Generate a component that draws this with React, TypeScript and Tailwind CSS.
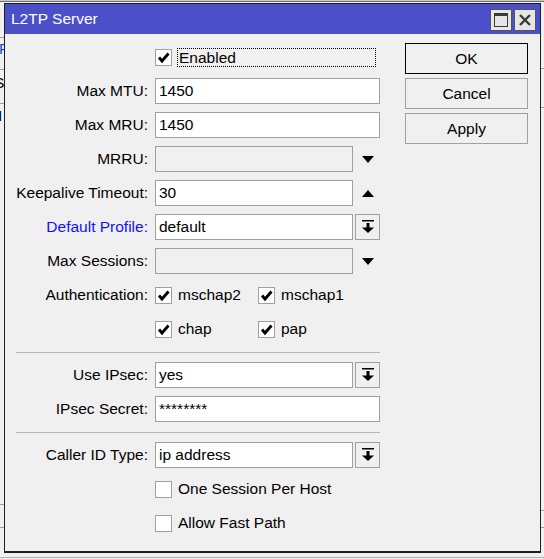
import React from "react";

const Check = () => (
	<svg width="15" height="15" viewBox="0 0 15 15">
		<path d="M3 7.5 L6 11 L12.5 3.5" fill="none" stroke="#000" strokeWidth="2.8" />
	</svg>
);

function CheckBox({ checked, label, framed }: { checked?: boolean; label: string; framed?: boolean }) {
	return (
		<div className="flex items-center">
			<div className="w-[17px] h-[17px] bg-white border border-[#a0a0a0] flex items-center justify-center">
				{checked && <Check />}
			</div>
			{framed ? (
				<span className="ml-[5px] w-[199px] h-[19px] border border-dotted border-black pl-[1px] leading-[17px]">
					{label}
				</span>
			) : (
				<span className="ml-[6px]">{label}</span>
			)}
		</div>
	);
}

const DropIcon = () => (
	<svg width="12" height="14" viewBox="0 0 12 14">
		<rect x="0" y="0" width="12" height="1.5" fill="#000" />
		<rect x="4.5" y="3" width="3" height="5" fill="#000" />
		<path d="M0 7.5 L12 7.5 L6 13 Z" fill="#000" />
	</svg>
);

const Tri = ({ up }: { up?: boolean }) => (
	<svg width="12" height="7" viewBox="0 0 12 7">
		<path d={up ? "M0 7 L12 7 L6 0 Z" : "M0 0 L12 0 L6 7 Z"} fill="#000" />
	</svg>
);

function Row({ label, blue, children }: { label?: string; blue?: boolean; children?: React.ReactNode }) {
	return (
		<div className="flex items-center h-[26px]">
			<div className={`w-[143px] text-right whitespace-nowrap ${blue ? "text-[#1010ff]" : "text-black"}`}>
				{label}
			</div>
			<div className="ml-[7px] flex items-center">{children}</div>
		</div>
	);
}

function Field({ value, wide, disabled }: { value?: string; wide?: boolean; disabled?: boolean }) {
	return (
		<div
			className={`h-[26px] border border-[#a0a0a0] pl-[3px] flex items-center ${wide ? "w-[225px]" : "w-[198px]"} ${
				disabled ? "bg-[#f0f0f0]" : "bg-white"
			}`}
		>
			{value}
		</div>
	);
}

const Side = ({ children, box }: { children: React.ReactNode; box?: boolean }) => (
	<div
		className={`ml-[2px] w-[25px] h-[26px] flex items-center justify-center ${
			box ? "border border-[#a0a0a0] bg-[#f0f0f0]" : ""
		}`}
	>
		{children}
	</div>
);

const Sep = () => <div className="ml-[11px] w-[364px] h-[1px] bg-[#b4b4b4] mt-[2px] mb-[1px]" />;

export default function App() {
	return (
		<div
			className="relative w-[544px] h-[559px] overflow-hidden bg-[#f0f0f0] text-[15.5px] text-black"
			style={{ fontFamily: '"Liberation Sans", Arial, sans-serif' }}
		>
			{/* window behind */}
			<div className="absolute left-0 top-0 w-full h-[1px] bg-[#c8c8c8]" />
			<div className="absolute left-0 top-[1px] w-full h-[1px] bg-[#707070]" />
			<div className="absolute left-0 top-[37px] w-[4px] h-[1px] bg-[#a0a0a0]" />
			<div className="absolute left-0 top-[69px] w-[4px] h-[1px] bg-[#a0a0a0]" />
			<div className="absolute left-0 top-[103px] w-[4px] h-[1px] bg-[#a0a0a0]" />
			<div className="absolute left-0 top-[504px] w-[4px] h-[1px] bg-[#a0a0a0]" />
			<div className="absolute left-0 top-[527px] w-[4px] h-[1px] bg-[#a0a0a0]" />
			<div className="absolute left-0 top-[40px] w-[4px] h-[90px] overflow-hidden leading-[17px]">
				<div className="-ml-[1px] text-[#1a50c8]">F</div>
				<div className="-ml-[6px] mt-[17px]">S</div>
				<div className="-ml-[2px] mt-[16px]">I</div>
			</div>
			<div className="absolute right-0 top-[68px] w-[3px] h-[1px] bg-[#a0a0a0]" />
			<div className="absolute right-0 top-[107px] w-[3px] h-[1px] bg-[#a0a0a0]" />
			<div className="absolute right-0 top-[510px] w-[3px] h-[1px] bg-[#a0a0a0]" />
			<div className="absolute right-0 top-[527px] w-[3px] h-[1px] bg-[#a0a0a0]" />
			<div className="absolute left-0 top-[557px] w-full h-[1px] bg-[#b0b0b0]" />

			{/* dialog */}
			<div className="absolute left-[4px] top-[3px] w-[537px] h-[550px] border border-b-2 border-[#1e1e1e] bg-[#f0f0f0] flex flex-col">
				<div className="h-[30px] bg-[#4b50c9] flex items-start justify-between">
					<div className="pl-[6px] pt-[6px] text-white leading-[18px]">L2TP Server</div>
					<div className="flex pt-[5px] pr-[4px] gap-[2px]">
						<div className="w-[22px] h-[22px] bg-[#e6e6e6] border border-[#555] flex items-center justify-center">
							<svg width="14" height="14" viewBox="0 0 14 14">
								<rect x="0.5" y="0.5" width="13" height="13" fill="none" stroke="#3a3a3a" />
								<rect x="0" y="0" width="14" height="3" fill="#3a3a3a" />
							</svg>
						</div>
						<div className="w-[22px] h-[22px] bg-[#e6e6e6] border border-[#555] flex items-center justify-center">
							<svg width="12" height="12" viewBox="0 0 12 12">
								<path d="M1 1 L11 11 M11 1 L1 11" stroke="#3a3a3a" strokeWidth="2.4" />
							</svg>
						</div>
					</div>
				</div>

				<div className="flex">
					<div className="w-[375px] pt-[10px] flex flex-col gap-[8px]">
						<Row>
							<CheckBox checked label="Enabled" framed />
						</Row>
						<Row label="Max MTU:">
							<Field value="1450" wide />
						</Row>
						<Row label="Max MRU:">
							<Field value="1450" wide />
						</Row>
						<Row label="MRRU:">
							<Field disabled />
							<Side>
								<Tri />
							</Side>
						</Row>
						<Row label="Keepalive Timeout:">
							<Field value="30" />
							<Side>
								<Tri up />
							</Side>
						</Row>
						<Row label="Default Profile:" blue>
							<Field value="default" />
							<Side box>
								<DropIcon />
							</Side>
						</Row>
						<Row label="Max Sessions:">
							<Field disabled />
							<Side>
								<Tri />
							</Side>
						</Row>
						<Row label="Authentication:">
							<div className="w-[103px]">
								<CheckBox checked label="mschap2" />
							</div>
							<CheckBox checked label="mschap1" />
						</Row>
						<Row>
							<div className="w-[103px]">
								<CheckBox checked label="chap" />
							</div>
							<CheckBox checked label="pap" />
						</Row>
						<Sep />
						<Row label="Use IPsec:">
							<Field value="yes" />
							<Side box>
								<DropIcon />
							</Side>
						</Row>
						<Row label="IPsec Secret:">
							<Field value="********" wide />
						</Row>
						<Sep />
						<Row label="Caller ID Type:">
							<Field value="ip address" />
							<Side box>
								<DropIcon />
							</Side>
						</Row>
						<Row>
							<CheckBox label="One Session Per Host" />
						</Row>
						<Row>
							<CheckBox label="Allow Fast Path" />
						</Row>
					</div>

					<div className="ml-[25px] pt-[9px] flex flex-col gap-[4px]">
						<button className="w-[123px] h-[31px] border border-black bg-[#f0f0f0]">OK</button>
						<button className="w-[123px] h-[31px] border border-[#a0a0a0] bg-[#f0f0f0]">Cancel</button>
						<button className="w-[123px] h-[31px] border border-[#a0a0a0] bg-[#f0f0f0]">Apply</button>
					</div>
				</div>
			</div>
		</div>
	);
}
